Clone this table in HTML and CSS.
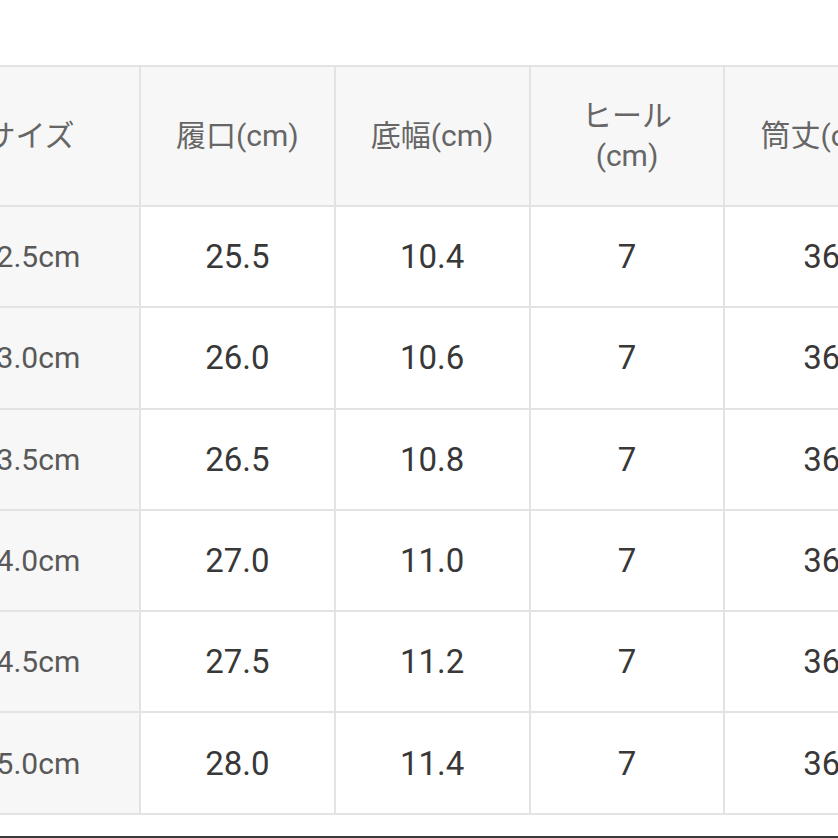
FILE: index.html
```html
<!DOCTYPE html>
<html lang="ja">
<head>
<meta charset="utf-8">
<title>サイズ表</title>
<link rel="stylesheet" href="styles.css">
</head>
<body>
<div class="page">
  <div class="table-wrap">
    <table class="size-table">
      <colgroup>
        <col class="col-first"><col class="col"><col class="col"><col class="col"><col class="col">
      </colgroup>
      <thead>
        <tr>
          <th>サイズ</th>
          <th>履口(cm)</th>
          <th>底幅(cm)</th>
          <th>ヒール<br>(cm)</th>
          <th>筒丈(cm)</th>
        </tr>
      </thead>
      <tbody>
        <tr><td class="size">22.5cm</td><td>25.5</td><td>10.4</td><td>7</td><td>36</td></tr>
        <tr><td class="size">23.0cm</td><td>26.0</td><td>10.6</td><td>7</td><td>36</td></tr>
        <tr><td class="size">23.5cm</td><td>26.5</td><td>10.8</td><td>7</td><td>36</td></tr>
        <tr><td class="size">24.0cm</td><td>27.0</td><td>11.0</td><td>7</td><td>36</td></tr>
        <tr><td class="size">24.5cm</td><td>27.5</td><td>11.2</td><td>7</td><td>36</td></tr>
        <tr><td class="size">25.0cm</td><td>28.0</td><td>11.4</td><td>7</td><td>36</td></tr>
      </tbody>
    </table>
  </div>
  <div class="bottom-bar"></div>
</div>
</body>
</html>
```

FILE: styles.css
```css
html, body {
  margin: 0;
  padding: 0;
  background: #ffffff;
}

.page {
  width: 838px;
  height: 838px;
  overflow: hidden;
  position: relative;
  font-family: Roboto, "Noto Sans CJK JP", sans-serif;
}

.table-wrap {
  padding-top: 65px;
  margin-left: -81px;
}

.size-table {
  border-collapse: collapse;
  table-layout: fixed;
  width: 999px;
}

.col-first {
  width: 220px;
}

.col {
  width: 194.8px;
}

.size-table th,
.size-table td {
  border: 2px solid #e3e3e3;
  text-align: center;
  vertical-align: middle;
  padding: 0;
}

.size-table th {
  height: 138px;
  background: #f7f7f7;
  color: #666666;
  font-size: 30px;
  font-weight: 400;
  line-height: 40px;
}

.size-table td {
  height: 99.3px;
  color: #383838;
  font-size: 33px;
}

.size-table td.size {
  background: #f7f7f7;
  color: #595959;
  font-size: 30px;
}

.bottom-bar {
  position: absolute;
  left: 0;
  right: 0;
  bottom: 0;
  height: 2px;
  background: #3a3a3a;
}
```
